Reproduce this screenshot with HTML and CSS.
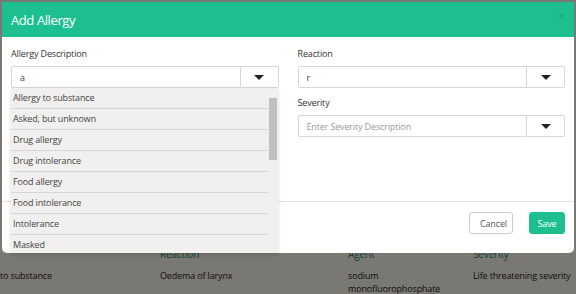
FILE: index.html
```html
<!DOCTYPE html>
<html lang="en">
<head>
    <meta charset="UTF-8">
    <meta name="viewport" content="width=device-width, initial-scale=1.0">
    <title>Add Allergy</title>
    <link rel="stylesheet" href="styles.css">
</head>
<body>
    <!-- page behind the modal -->
    <div class="page">
        <div class="page-table">
            <div class="th"></div>
            <div class="th">Reaction</div>
            <div class="th">Agent</div>
            <div class="th">Severity</div>
            <div class="td">to substance</div>
            <div class="td">Oedema of larynx</div>
            <div class="td agent">sodium monofluorophosphate</div>
            <div class="td">Life threatening severity</div>
        </div>
    </div>

    <div class="backdrop"></div>

    <div class="modal">
        <div class="modal-header">
            <h1>Add Allergy</h1>
            <span class="close">&times;</span>
        </div>
        <div class="modal-body">
            <div class="field-col">
                <div class="field">
                    <label>Allergy Description</label>
                    <div class="combo">
                        <input type="text" class="combo-input" value="a">
                        <button class="combo-btn"><span class="caret"></span></button>
                    </div>
                    <ul class="dropdown">
                        <li>Allergy to substance</li>
                        <li>Asked, but unknown</li>
                        <li>Drug allergy</li>
                        <li>Drug intolerance</li>
                        <li>Food allergy</li>
                        <li>Food intolerance</li>
                        <li>Intolerance</li>
                        <li>Masked</li>
                    </ul>
                </div>
            </div>
            <div class="field-col">
                <div class="field">
                    <label>Reaction</label>
                    <div class="combo">
                        <input type="text" class="combo-input" value="r">
                        <button class="combo-btn"><span class="caret"></span></button>
                    </div>
                </div>
                <div class="field">
                    <label>Severity</label>
                    <div class="combo">
                        <input type="text" class="combo-input" placeholder="Enter Severity Description">
                        <button class="combo-btn"><span class="caret"></span></button>
                    </div>
                </div>
            </div>
        </div>
        <div class="modal-footer">
            <button class="btn btn-default">Cancel</button>
            <button class="btn btn-primary">Save</button>
        </div>
    </div>
</body>
</html>
```

FILE: styles.css
```css
:root {
    --green: #1dbf91;
    --border: #d6d6d6;
}

* {
    margin: 0;
    padding: 0;
    box-sizing: border-box;
    font-family: "Open Sans", "Liberation Sans", sans-serif;
    letter-spacing: -0.15px;
}

body {
    width: 576px;
    height: 294px;
    overflow: hidden;
    background: #f5f0e6;
    position: relative;
}

.page {
    padding-top: 247px;
}

.page-table {
    display: grid;
    grid-template-columns: 160px 188px 125px 103px;
    row-gap: 8px;
    font-size: 9px;
}

.th {
    color: #1b8a62;
    font-size: 10px;
}

.td {
    color: #222;
    white-space: nowrap;
}

.td.agent {
    white-space: normal;
    width: 100px;
}

.backdrop {
    position: absolute;
    inset: 0;
    background: rgba(0, 0, 0, 0.5);
}

.modal {
    position: absolute;
    top: 2px;
    left: 2px;
    width: 572px;
    height: 251px;
    background: #fff;
    border-radius: 0 0 5px 5px;
}

.modal-header {
    height: 35px;
    background: var(--green);
    display: flex;
    align-items: center;
    justify-content: space-between;
    padding: 0 9px 0 9px;
}

.modal-header h1 {
    font-size: 13px;
    font-weight: 400;
    color: #fff;
    letter-spacing: -0.4px;
}

.close {
    color: #16a67c;
    font-size: 13px;
    line-height: 1;
    margin-top: -6px;
}

.modal-body {
    height: 165px;
    display: flex;
    gap: 19px;
    padding: 10px 9px 0 9px;
    border-bottom: 1px solid #e5e5e5;
}

.field-col {
    flex: 1;
    display: flex;
    flex-direction: column;
    gap: 8px;
}

.field {
    position: relative;
}

.field label {
    display: block;
    font-size: 9px;
    color: #333;
    height: 19px;
    line-height: 14px;
}

.combo {
    display: flex;
    height: 22px;
}

.combo-input {
    flex: 1;
    min-width: 0;
    border: 1px solid var(--border);
    border-radius: 2px 0 0 2px;
    padding: 0 8px;
    font-size: 9px;
    color: #444;
    outline: none;
}

.combo-input::placeholder {
    color: #999;
}

.combo-btn {
    width: 38px;
    border: 1px solid var(--border);
    border-left: none;
    border-radius: 0 2px 2px 0;
    background: #fff;
    display: flex;
    align-items: center;
    justify-content: center;
}

.caret {
    width: 0;
    height: 0;
    border-left: 5px solid transparent;
    border-right: 5px solid transparent;
    border-top: 5px solid #222;
}

.dropdown {
    position: absolute;
    top: 41px;
    left: 0;
    width: 267px;
    height: 165px;
    list-style: none;
    background: #f1f0ee;
    overflow: hidden;
    padding-right: 10px;
    box-shadow: 0 2px 4px rgba(0, 0, 0, 0.15);
    z-index: 2;
}

.dropdown::after {
    content: "";
    position: absolute;
    top: 10px;
    right: 1px;
    width: 8px;
    height: 62px;
    background: #c2c0bc;
}

.dropdown li {
    height: 21px;
    line-height: 20px;
    padding-left: 2px;
    font-size: 9px;
    color: #444;
    border-bottom: 1px solid #d7d6d3;
}

.modal-footer {
    display: flex;
    justify-content: flex-end;
    align-items: center;
    gap: 16px;
    height: 50px;
    padding: 0 9px 8px 0;
}

.btn {
    height: 22px;
    border-radius: 3px;
    font-size: 9px;
    padding: 0 10px;
}

.btn-default {
    background: #fff;
    border: 1px solid #ccc;
    color: #555;
    width: 44px;
}

.btn-primary {
    background: var(--green);
    border: 1px solid var(--green);
    color: #fff;
    width: 36px;
    padding: 0;
}
```
